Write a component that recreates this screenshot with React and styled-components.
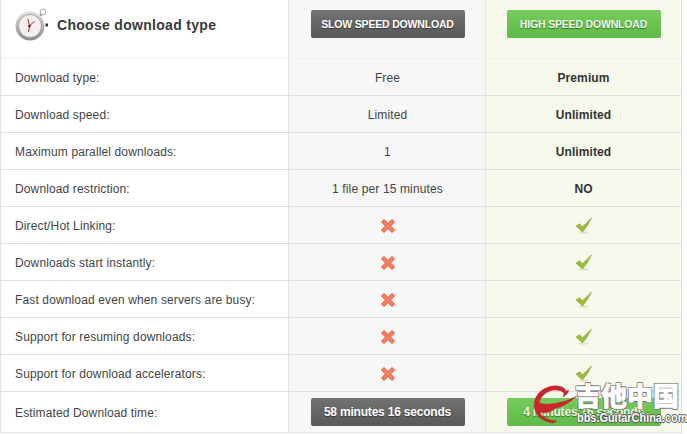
import React from "react";
import styled, { createGlobalStyle } from "styled-components";

const Global = createGlobalStyle`
  html, body { margin: 0; padding: 0; background: #fff; }
  body { font-family: "Liberation Sans", Arial, sans-serif; overflow: hidden; }
`;

const Page = styled.div`
  position: relative;
  width: 687px;
  height: 434px;
  overflow: hidden;
`;

const Table = styled.div`
  width: 682px;
  box-sizing: border-box;
  border-left: 1px solid #e2e2e2;
  border-right: 1px solid #e2e2e2;
  border-bottom: 1px solid #e2e2e2;
`;

const Row = styled.div`
  display: grid;
  grid-template-columns: 288px 197px 195px;
  height: ${props => props.$height || 37}px;
  box-sizing: border-box;
  border-bottom: 1px solid ${props => props.$head ? "#f1f1ea" : "#e0e0e0"};
  &:last-child { border-bottom: 0; }
`;

const Label = styled.div`
  display: flex;
  align-items: center;
  padding: 1px 0 0 14px;
  font-size: 12px;
  letter-spacing: 0.13px;
  color: #444;
  background: #fff;
  border-right: 1px solid #e4e4e4;
`;

const Heading = styled.div`
  display: flex;
  align-items: center;
  gap: 9px;
  padding: 0 0 9px 14px;
  font-size: 14px;
  font-weight: bold;
  letter-spacing: 0.3px;
  color: #3a3a3a;
  background: #fff;
  border-right: 1px solid #e4e4e4;
`;

const Cell = styled.div`
  display: flex;
  align-items: center;
  justify-content: center;
  padding: 1px 0 0 ${props => props.$premium ? 0 : 1}px;
  font-size: 12px;
  font-weight: ${props => props.$premium ? "bold" : "normal"};
  letter-spacing: ${props => props.$premium ? "0.1px" : "0.13px"};
  color: ${props => props.$premium ? "#333" : "#444"};
  background: ${props => props.$premium ? "#f6f9ec" : "#f7f7f7"};
  border-right: ${props => props.$premium ? "0" : "1px solid #e4e4e4"};
`;

const ButtonCell = styled(Cell)`
  align-items: flex-start;
  padding-top: ${props => props.$pad}px;
`;

const Button = styled.div`
  display: flex;
  align-items: center;
  justify-content: center;
  width: 154px;
  height: 28px;
  border-radius: 2px;
  font-size: ${props => props.$caps ? 10.5 : 12}px;
  font-weight: bold;
  letter-spacing: ${props => props.$caps ? "-0.18px" : "-0.2px"};
  color: ${props => props.$green ? "#f0f8e8" : "#fff"};
  text-shadow: 0 1px 1px rgba(0, 0, 0, 0.45);
  background: ${props => props.$green
    ? "linear-gradient(#76cb5c, #60bb47)"
    : "linear-gradient(#737373, #585858)"};
`;

const Watermark = styled.div`
  position: absolute;
  left: 533px;
  top: 384px;
  width: 150px;
  height: 46px;
`;

const Hanzi = styled.div`
  position: absolute;
  left: 42px;
  top: -4px;
  font-family: "Noto Sans CJK SC", sans-serif;
  font-size: 26px;
  line-height: 30px;
  font-weight: 900;
  white-space: nowrap;
  color: #fff;
  -webkit-text-stroke: 0.6px #fff;
  text-shadow: 1px 1px 0 #777, -1px 1px 0 #777, 1px -1px 0 #777, -1px -1px 0 #777;
`;

const Url = styled.div`
  position: absolute;
  left: 44px;
  top: 27px;
  font-size: 13px;
  line-height: 14px;
  font-weight: bold;
  white-space: nowrap;
  color: #fff;
  transform: scaleX(0.84);
  transform-origin: left center;
  text-shadow: 1px 0 0 #555, -1px 0 0 #555, 0 1px 0 #555, 0 -1px 0 #555;
`;

const Dragon = styled.svg`
  position: absolute;
  left: 0;
  top: 0;
`;

const Stopwatch = () => (
  <svg width="33" height="33" viewBox="0 0 33 33">
    <defs>
      <linearGradient id="rim" x1="0" y1="0" x2="0" y2="1">
        <stop offset="0" stopColor="#e0e0e0" />
        <stop offset="1" stopColor="#8a8a8a" />
      </linearGradient>
    </defs>
    <circle cx="28" cy="4" r="2.8" fill="none" stroke="#bdbdbd" strokeWidth="1.2" />
    <path d="M25 8l1.5-2" stroke="#999" strokeWidth="2" />
    <rect x="30.5" y="15.5" width="2.5" height="3" fill="#333" />
    <circle cx="15" cy="18" r="14.5" fill="url(#rim)" />
    <circle cx="15" cy="18" r="11.5" fill="#f5eeee" stroke="#888" strokeWidth="0.7" />
    <path d="M14.500 18l-1.500-7M14.500 18l5-5M14.500 18l-1 6" stroke="#b0303a" strokeWidth="1" fill="none" />
    <circle cx="14.500" cy="18" r="1.300" fill="#5b1a20" />
  </svg>
);

const CrossIcon = () => (
  <svg width="16" height="16" viewBox="0 0 16 16">
    <path d="M1.500 4l2.500-2.500L8 5.500l4-4L14.500 4l-4 4 4 4-2.500 2.500-4-4-4 4L1.500 12l4-4z" fill="#f47f62" stroke="#dd5a3a" strokeWidth="1" strokeLinejoin="round" />
  </svg>
);

const CheckIcon = () => (
  <svg width="18" height="17" viewBox="0 0 18 17">
    <ellipse cx="8.500" cy="15.500" rx="5" ry="1.200" fill="#dfe5c8" />
    <path d="M1 9l3.500-2.200 3 3L16.500 1 12.500 8.500 7.500 15z" fill="#98bc3c" stroke="#83a82e" strokeWidth="0.6" strokeLinejoin="round" />
  </svg>
);

const textRows = [
  ["Download type:", "Free", "Premium"],
  ["Download speed:", "Limited", "Unlimited"],
  ["Maximum parallel downloads:", "1", "Unlimited"],
  ["Download restriction:", "1 file per 15 minutes", "NO"],
];

const featureRows = [
  "Direct/Hot Linking:",
  "Downloads start instantly:",
  "Fast download even when servers are busy:",
  "Support for resuming downloads:",
  "Support for download accelerators:",
];

export default function App() {
  return (
    <Page>
      <Global />
      <Table>
        <Row $head $height={59}>
          <Heading>
            <Stopwatch />
            Choose download type
          </Heading>
          <ButtonCell $pad={10}>
            <Button $caps>SLOW SPEED DOWNLOAD</Button>
          </ButtonCell>
          <ButtonCell $premium $pad={10}>
            <Button $caps $green>HIGH SPEED DOWNLOAD</Button>
          </ButtonCell>
        </Row>
        {textRows.map(([label, free, premium]) => (
          <Row key={label}>
            <Label>{label}</Label>
            <Cell>{free}</Cell>
            <Cell $premium>{premium}</Cell>
          </Row>
        ))}
        {featureRows.map(label => (
          <Row key={label}>
            <Label>{label}</Label>
            <Cell><CrossIcon /></Cell>
            <Cell $premium><CheckIcon /></Cell>
          </Row>
        ))}
        <Row $height={40}>
          <Label>Estimated Download time:</Label>
          <ButtonCell $pad={6}><Button>58 minutes 16 seconds</Button></ButtonCell>
          <ButtonCell $premium $pad={6}><Button $green>4 minutes 16 seconds</Button></ButtonCell>
        </Row>
      </Table>
      <Watermark>
        <Dragon width="46" height="42" viewBox="0 0 46 42">
          <path d="M31 4C24 0 14 2 8 7 2 12 0 19 2 26c2 7 9 12 18 13l4-2c-7 0-14-3-18-9 6 2 12 0 17-4 6-1 13-5 21-12-8 4-14 6-20 7-5 1-12 2-18 0C7 13 14 6 22 6c4 0 7 1 9 3l-1 4 4-3 2-4-3 1z" fill="#c9252b" stroke="#b81f25" strokeWidth="0.4" strokeLinejoin="round" />
        </Dragon>
        <Hanzi>吉他中国</Hanzi>
        <Url>bbs.GuitarChina.com</Url>
      </Watermark>
    </Page>
  );
}
